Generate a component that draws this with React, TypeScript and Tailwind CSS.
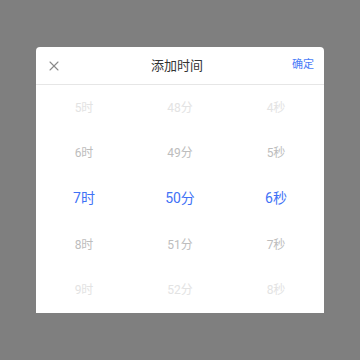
import { X } from 'lucide-react';

const columns = [
  { items: ['5时', '6时', '7时', '8时', '9时'] },
  { items: ['48分', '49分', '50分', '51分', '52分'] },
  { items: ['4秒', '5秒', '6秒', '7秒', '8秒'] },
];

const rowStyle = [
  'text-[12px] text-[#e3e3e3]',
  'text-[12px] text-[#bdbdbd]',
  'text-[14px] text-[#3f72f6]',
  'text-[12px] text-[#bdbdbd]',
  'text-[12px] text-[#e3e3e3]',
];

export default function App() {
  return (
    <div
      className="w-[360px] h-[360px] bg-[#7f7f7f] pt-[47px] pl-[36px]"
      style={{ fontFamily: '"Roboto", "Noto Sans CJK SC", sans-serif' }}
    >
      <div className="w-[288px] h-[266px] bg-white rounded-t-[4px] overflow-hidden">
        <div className="h-[38px] flex items-center justify-between px-[10px] border-b border-[#e6e6e6]">
          <X size={16} strokeWidth={1.6} className="text-[#8a8a8a]" />
          <span className="text-[13px] text-[#333333]">添加时间</span>
          <span className="text-[11px] text-[#4a7cf7]">确定</span>
        </div>
        <div className="grid grid-cols-3">
          {columns.map((col, ci) => (
            <div key={ci} className="flex flex-col">
              {col.items.map((t, ri) => (
                <div key={t} className={`h-[45.6px] flex items-center justify-center ${rowStyle[ri]}`}>
                  {t}
                </div>
              ))}
            </div>
          ))}
        </div>
      </div>
    </div>
  );
}
